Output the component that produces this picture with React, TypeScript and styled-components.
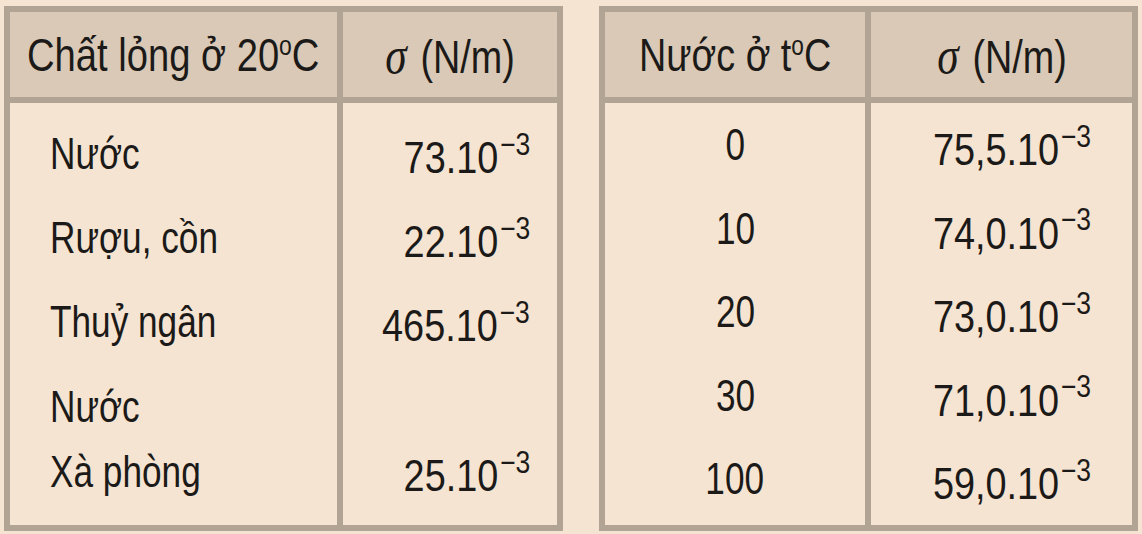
import React from "react";
import styled, { createGlobalStyle } from "styled-components";

const GlobalStyle = createGlobalStyle`
  html, body {
    margin: 0;
    padding: 0;
    background: #f5e4d2;
  }
  body {
    font-family: "Liberation Sans", Arial, sans-serif;
    color: #1c1a18;
  }
`;

const BORDER = "#b2a494";

interface Row {
  label: string;
  value: string;
}

const liquids: Row[] = [
  { label: "Nước", value: "73" },
  { label: "Rượu, cồn", value: "22" },
  { label: "Thuỷ ngân", value: "465" },
];

const temps: Row[] = [
  { label: "0", value: "75,5" },
  { label: "10", value: "74,0" },
  { label: "20", value: "73,0" },
  { label: "30", value: "71,0" },
  { label: "100", value: "59,0" },
];

const SigmaHead = () => (
  <HeadCell>
    <Narrow origin="center" scale={0.82}>
      <Sigma>σ</Sigma>(N/m)
    </Narrow>
  </HeadCell>
);

const Power = ({ base, origin }: { base: string; origin: string }) => (
  <Narrow origin={origin} scale={0.86}>
    {base}.10<Sup>−3</Sup>
  </Narrow>
);

const App = () => {
  return (
    <Page>
      <GlobalStyle />
      <Table cols="333px 214px">
        <HeadCell divider>
          <Narrow origin="center" scale={0.83}>
            Chất lỏng ở 20<Deg>o</Deg>C
          </Narrow>
        </HeadCell>
        <SigmaHead />
        <BodyCol divider pad="9px 0 0 40px" align="left">
          {liquids.map((r) => (
            <Line key={r.label} h={84}>
              <Narrow origin="left">{r.label}</Narrow>
            </Line>
          ))}
          <Stack>
            <Line h={65}>
              <Narrow origin="left">Nước</Narrow>
            </Line>
            <Line h={65}>
              <Narrow origin="left">Xà phòng</Narrow>
            </Line>
          </Stack>
        </BodyCol>
        <BodyCol pad="13px 27px 0 0" align="right">
          {liquids.map((r) => (
            <Line key={r.label} h={84}>
              <Power base={r.value} origin="right" />
            </Line>
          ))}
          <Stack>
            <Line h={65} />
            <Line h={65}>
              <Power base="25" origin="right" />
            </Line>
          </Stack>
        </BodyCol>
      </Table>

      <Table cols="266px 261px">
        <HeadCell divider>
          <Narrow origin="center" scale={0.82}>
            Nước ở t<Deg>o</Deg>C
          </Narrow>
        </HeadCell>
        <SigmaHead />
        <BodyCol divider pad="0" align="center">
          {temps.map((r) => (
            <Line key={r.label} h={83.5}>
              <Narrow origin="center">{r.label}</Narrow>
            </Line>
          ))}
        </BodyCol>
        <BodyCol pad="5px 0 0 20px" align="center">
          {temps.map((r) => (
            <Line key={r.label} h={83.5}>
              <Power base={r.value} origin="center" />
            </Line>
          ))}
        </BodyCol>
      </Table>
    </Page>
  );
};

export default App;

const Page = styled.div`
  display: flex;
  gap: 36px;
  padding: 6px 4px 0 4px;
  height: 534px;
  box-sizing: border-box;
`;

const Table = styled.div<{ cols: string }>`
  display: grid;
  grid-template-columns: ${({ cols }) => cols};
  grid-template-rows: 91px 422px;
  border: 6px solid ${BORDER};
  box-sizing: content-box;
  align-self: flex-start;
`;

const HeadCell = styled.div<{ divider?: boolean }>`
  display: flex;
  align-items: center;
  justify-content: center;
  background: #d9c9b6;
  border-bottom: 6px solid ${BORDER};
  ${({ divider }) => divider && `border-right: 6px solid ${BORDER};`}
  font-size: 46px;
  white-space: nowrap;
`;

const Narrow = styled.span<{ origin: string; scale?: number }>`
  display: inline-block;
  transform: scaleX(${({ scale }) => scale ?? 0.8});
  transform-origin: ${({ origin }) => origin} center;
  white-space: nowrap;
`;

const Deg = styled.span`
  font-size: 0.6em;
  position: relative;
  top: -0.55em;
`;

const Sigma = styled.span`
  font-family: "Liberation Serif", "Times New Roman", serif;
  font-style: italic;
  font-size: 1.15em;
  margin-right: 0.32em;
`;

const BodyCol = styled.div<{ divider?: boolean; pad: string; align: string }>`
  display: flex;
  flex-direction: column;
  padding: ${({ pad }) => pad};
  text-align: ${({ align }) => align};
  font-size: 44px;
  ${({ divider }) => divider && `border-right: 6px solid ${BORDER};`}
`;

const Line = styled.div<{ h: number }>`
  height: ${({ h }) => h}px;
  line-height: ${({ h }) => h}px;
  white-space: nowrap;
`;

const Stack = styled.div`
  display: flex;
  flex-direction: column;
  padding-top: 10px;
`;

const Sup = styled.span`
  font-size: 0.7em;
  position: relative;
  top: -0.6em;
  margin-left: 2px;
`;
